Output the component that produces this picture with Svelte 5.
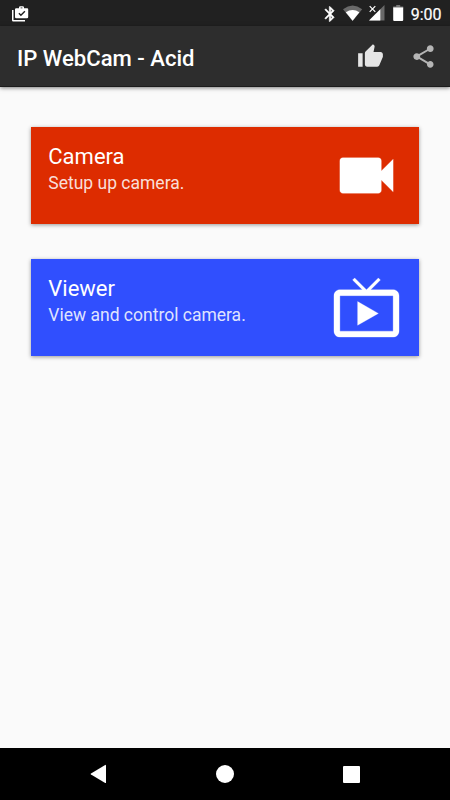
<script>
  const cards = [
    {
      id: 'camera',
      title: 'Camera',
      text: 'Setup up camera.',
      icon: 'M17 10.5V7c0-.55-.45-1-1-1H4c-.55 0-1 .45-1 1v10c0 .55.45 1 1 1h12c.55 0 1-.45 1-1v-3.5l4 4v-11l-4 4z'
    },
    {
      id: 'viewer',
      title: 'Viewer',
      text: 'View and control camera.',
      icon: 'M21 6h-7.59l3.29-3.29L16 2l-4 4-4-4-.71.71L10.59 6H3c-1.1 0-2 .89-2 2v12c0 1.1.9 2 2 2h18c1.1 0 2-.9 2-2V8c0-1.11-.9-2-2-2zm0 14H3V8h18v12zM9 10v8l7-4z'
    }
  ];
</script>

<div class="screen">
  <div class="status">
    <svg class="shop" width="17" height="16" viewBox="0 0 17 16">
      <path fill="#fff" d="M0 4h1.5v10H13v1.5H1.2Q0 15.5 0 14.3zM4.2 2.3H7V1.5Q7 .2 8.3.2h2.4Q12 .2 12 1.5v.8h3.2q1 0 1 1V11q0 1.200-1.200 1.200H4.200Q3 12.200 3 11V3.300q0-1 1.200-1z" />
      <path fill="none" stroke="#212121" stroke-width="1.4" d="M6.900 7.200l2 2 4-4" />
      <path fill="#212121" d="M8.600 1.500h1.800v.8H8.600z" />
    </svg>
    <div class="indicators">
      <svg class="bt" width="18" height="18" viewBox="0 0 24 24">
        <path fill="#fff" stroke="#fff" stroke-width=".6" d="M17.710 7.710L12 2h-1v7.590L6.410 5 5 6.410 10.590 12 5 17.590 6.410 19 11 14.410V22h1l5.710-5.710-4.300-4.290 4.300-4.290zM13 5.830l1.880 1.880L13 9.590V5.830zm1.880 10.460L13 18.170v-3.760l1.880 1.880z" />
      </svg>
      <svg class="wifi" width="20" height="17" viewBox="0 0 20 17">
        <path fill="#6a6a6a" d="M0 4.200Q9.600-3 19.200 4.200L9.600 16z" />
        <path fill="#fff" d="M2.800 7.300Q9.600 2.800 16.400 7.300L9.600 15.800z" />
      </svg>
      <svg class="signal" width="16" height="16" viewBox="0 0 16 16">
        <path fill="#696969" d="M15.500 0v15.500H0z" />
        <path fill="#fff" d="M11.300 4.200v11.300H0z" />
        <path fill="none" stroke="#212121" stroke-width="3" d="M.5 1l6 6m0-6l-6 6" />
        <path fill="none" stroke="#fff" stroke-width="1.200" d="M.7 1.200l5.600 5.600m0-5.600L.7 6.800" />
      </svg>
      <svg class="battery" width="11" height="17" viewBox="0 0 11 17">
        <path fill="#777" d="M3.200 0h4v1.500h3v2H.2v-2h3z" />
        <path fill="#fff" d="M.2 2.500h10V15q0 1-1 1h-8q-1 0-1-1z" />
      </svg>
      <span class="time">9:00</span>
    </div>
  </div>

  <header class="bar">
    <h1>IP WebCam - Acid</h1>
    <svg class="like" width="27" height="27" viewBox="0 0 24 24">
      <path fill="#e5e5e5" d="M1 21h4V9H1v12zm22-11c0-1.100-.9-2-2-2h-6.310l.95-4.570.03-.32c0-.41-.17-.79-.44-1.060L14.170 1 7.590 7.590C7.220 7.950 7 8.450 7 9v10c0 1.100.9 2 2 2h9c.83 0 1.540-.5 1.840-1.220l3.020-7.050c.09-.23.14-.47.14-.73v-2z" />
    </svg>
    <svg class="share" width="27" height="27" viewBox="0 0 24 24">
      <path fill="#b5b5b5" d="M18 16.080c-.76 0-1.440.3-1.960.77L8.910 12.700c.05-.23.09-.46.09-.7s-.04-.47-.09-.7l7.050-4.110c.54.5 1.250.81 2.040.81 1.660 0 3-1.340 3-3s-1.340-3-3-3-3 1.340-3 3c0 .24.040.47.090.7L8.040 9.810C7.500 9.310 6.790 9 6 9c-1.660 0-3 1.340-3 3s1.340 3 3 3c.79 0 1.500-.31 2.040-.81l7.120 4.160c-.05.210-.08.430-.08.650 0 1.610 1.310 2.920 2.920 2.920s2.920-1.310 2.920-2.920-1.310-2.920-2.920-2.920z" />
    </svg>
  </header>

  <main>
    {#each cards as card (card.id)}
      <section class="card {card.id}">
        <div class="copy">
          <h2>{card.title}</h2>
          <p>{card.text}</p>
        </div>
        <svg width="71" height="71" viewBox="0 0 24 24"><path fill="#fff" stroke="#fff" stroke-width=".1" stroke-linejoin="round" d={card.icon} /></svg>
      </section>
    {/each}
  </main>

  <nav>
    <svg width="18" height="20" viewBox="0 0 18 20"><path fill="#fff" d="M16 1.300v17.200q0 .8-.8.400L1 10.600Q0 10 1 9.400L15.200 1q.8-.4.800.3z" /></svg>
    <svg width="18" height="18" viewBox="0 0 18 18"><circle cx="9" cy="9" r="9" fill="#fff" /></svg>
    <svg width="17" height="17" viewBox="0 0 17 17"><rect width="17" height="17" rx="1" fill="#fff" /></svg>
  </nav>
</div>

<style>
  :global(body) {
    margin: 0;
  }
  .screen {
    width: 450px;
    height: 800px;
    display: flex;
    flex-direction: column;
    overflow: hidden;
    background: #fafafa;
    color: #fff;
    font-family: Roboto, sans-serif;
  }
  .status {
    height: 26px;
    flex: none;
    display: flex;
    justify-content: space-between;
    background: #212121;
  }
  .shop {
    margin: 6px 0 0 12px;
  }
  .indicators {
    display: flex;
    align-items: flex-start;
    padding-right: 8.500px;
  }
  .bt {
    margin: 4.500px 4px 0 0;
  }
  .wifi {
    margin: 5px 6px 0 0;
  }
  .signal {
    margin: 5px 8px 0 0;
  }
  .battery {
    margin: 5px 7px 0 0;
  }
  .time {
    font-size: 16px;
    line-height: 29px;
    height: 26px;
    -webkit-text-stroke: 0.2px #fff;
  }
  .bar {
    height: 61px;
    flex: none;
    box-sizing: border-box;
    display: flex;
    align-items: center;
    padding: 0 13px 0 17px;
    background: #2d2d2d;
    border-bottom: 1px solid #1c1c1c;
    box-shadow: 0 1px 4px rgba(0, 0, 0, 0.5);
  }
  h1 {
    flex: 1;
    margin: 4px 0 0;
    font-size: 22.100px;
    line-height: 28px;
    font-weight: 500;
    white-space: nowrap;
  }
  .like {
    margin-right: 26px;
  }
  main {
    flex: 1;
    display: flex;
    flex-direction: column;
    gap: 35px;
    padding: 40px 31px 0;
  }
  .card {
    height: 97px;
    box-sizing: border-box;
    display: flex;
    align-items: center;
    justify-content: space-between;
    padding: 0 17px 0 17.300px;
    box-shadow: 0 1px 4px rgba(0, 0, 0, 0.4);
  }
  .camera {
    background: #dd2c00;
  }
  .viewer {
    background: #304ffe;
  }
  .copy {
    align-self: flex-start;
    padding-top: 16px;
  }
  h2 {
    margin: 0;
    font-size: 22px;
    line-height: 28px;
    font-weight: 400;
  }
  p {
    margin: 0;
    font-size: 17.500px;
    line-height: 25px;
    color: rgba(255, 255, 255, 0.86);
    white-space: nowrap;
  }
  nav {
    height: 52px;
    flex: none;
    box-sizing: border-box;
    display: flex;
    align-items: center;
    justify-content: space-between;
    padding: 0 90px 0 89.500px;
    background: #000;
  }
  nav svg:nth-child(2) {
    margin-right: 1px;
  }
</style>
